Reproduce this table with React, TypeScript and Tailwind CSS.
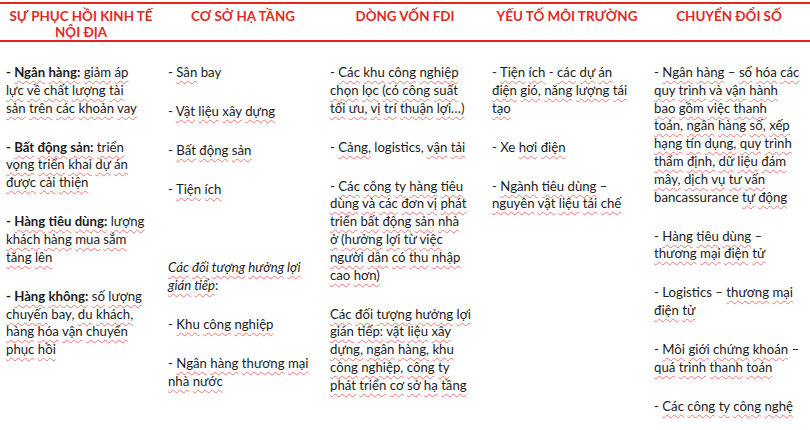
import React from "react";

type Para = { lines: string[]; gap?: number };

const SKIP = new Set(["-", "–", "bay", "bay,", "Logistics", "logistics,", "bancassurance", "Xe"]);

function Line({ text }: { text: string }) {
  const parts: { t: string; b: boolean; i: boolean }[] = [];
  let b = false;
  let it = false;
  let buf = "";
  for (const ch of text) {
    if (ch === "*" || ch === "_") {
      if (buf) parts.push({ t: buf, b, i: it });
      buf = "";
      if (ch === "*") b = !b;
      else it = !it;
    } else buf += ch;
  }
  if (buf) parts.push({ t: buf, b, i: it });
  return (
    <div className="whitespace-nowrap h-[17.8px]">
      {parts.map((p, pi) => (
        <span key={pi} className={(p.b ? "font-bold " : "") + (p.i ? "italic" : "")}>
          {p.t.split(/(\s+)/).map((w, wi) =>
            w.trim() === "" || SKIP.has(w) || /^[:)]$/.test(w) ? (
              <React.Fragment key={wi}>{w}</React.Fragment>
            ) : (
              <span
                key={wi}
                className="underline decoration-wavy decoration-[#ee5a55]/80 decoration-1 underline-offset-[3px]"
              >
                {w}
              </span>
            )
          )}
        </span>
      ))}
    </div>
  );
}

function Column({ paras }: { paras: Para[] }) {
  return (
    <div className="pl-[6px] pr-1">
      {paras.map((p, i) => (
        <div key={i} style={{ marginTop: i === 0 ? 0 : p.gap ?? 21.2 }}>
          {p.lines.map((l, j) => (
            <Line key={j} text={l} />
          ))}
        </div>
      ))}
    </div>
  );
}

const cols: Para[][] = [
  [
    { lines: ["*- Ngân hàng:* giảm áp", "lực về chất lượng tài", "sản trên các khoản vay"] },
    { lines: ["*- Bất động sản:* triển", "vọng triển khai dự án", "được cải thiện"] },
    { lines: ["*- Hàng tiêu dùng:* lượng", "khách hàng mua sắm", "tăng lên"] },
    { lines: ["*- Hàng không:* số lượng", "chuyến bay, du khách,", "hàng hóa vận chuyển", "phục hồi"] },
  ],
  [
    { lines: ["- Sân bay"] },
    { lines: ["- Vật liệu xây dựng"] },
    { lines: ["- Bất động sản"] },
    { lines: ["- Tiện ích"] },
    { lines: ["_Các đối tượng hưởng lợi_", "_gián tiếp_:"], gap: 60.2 },
    { lines: ["- Khu công nghiệp"] },
    { lines: ["- Ngân hàng thương mại", "nhà nước"] },
  ],
  [
    { lines: ["- Các khu công nghiệp", "chọn lọc (có công suất", "tối ưu, vị trí thuận lợi…)"] },
    { lines: ["- Cảng, logistics, vận tải"] },
    {
      lines: [
        "- Các công ty hàng tiêu",
        "dùng và các đơn vị phát",
        "triển bất động sản nhà",
        "ở (hưởng lợi từ việc",
        "người dân có thu nhập",
        "cao hơn)",
      ],
    },
    {
      lines: [
        "Các đối tượng hưởng lợi",
        "gián tiếp: vật liệu xây",
        "dựng, ngân hàng, khu",
        "công nghiệp, công ty",
        "phát triển cơ sở hạ tầng",
      ],
    },
  ],
  [
    { lines: ["- Tiện ích - các dự án", "điện gió, năng lượng tái", "tạo"] },
    { lines: ["- Xe hơi điện"] },
    { lines: ["- Ngành tiêu dùng –", "nguyên vật liệu tái chế"] },
  ],
  [
    {
      lines: [
        "- Ngân hàng – số hóa các",
        "quy trình và vận hành",
        "bao gồm việc thanh",
        "toán, ngân hàng số, xếp",
        "hạng tín dụng, quy trình",
        "thẩm định, dữ liệu đám",
        "mây, dịch vụ tư vấn",
        "bancassurance tự động",
      ],
    },
    { lines: ["- Hàng tiêu dùng –", "thương mại điện tử"] },
    { lines: ["- Logistics – thương mại", "điện tử"] },
    { lines: ["- Môi giới chứng khoán –", "quá trình thanh toán"] },
    { lines: ["- Các công ty công nghệ"] },
  ],
];

const heads = [
  ["SỰ PHỤC HỒI KINH TẾ", "NỘI ĐỊA"],
  ["CƠ SỞ HẠ TẦNG"],
  ["DÒNG VỐN FDI"],
  ["YẾU TỐ MÔI TRƯỜNG"],
  ["CHUYỂN ĐỔI SỐ"],
];

export default function App() {
  return (
    <div
      className="w-[810px] h-[430px] overflow-hidden bg-white text-[#1c1c1c]"
      style={{ fontFamily: "Lato, 'Noto Sans', sans-serif" }}
    >
      <div className="mt-[2px] h-[40px] border-t-2 border-b-2 border-[#e8231f] grid grid-cols-5">
        {heads.map((h, i) => (
          <div
            key={i}
            className="pt-[4px] text-center text-[13.4px] leading-[16px] font-bold text-[#dd2a26]"
          >
            {h.map((l, j) => (
              <div key={j}>{l}</div>
            ))}
          </div>
        ))}
      </div>
      <div className="grid grid-cols-5 pt-[22px] text-[13.2px] leading-[17.8px]">
        {cols.map((c, i) => (
          <Column key={i} paras={c} />
        ))}
      </div>
    </div>
  );
}
